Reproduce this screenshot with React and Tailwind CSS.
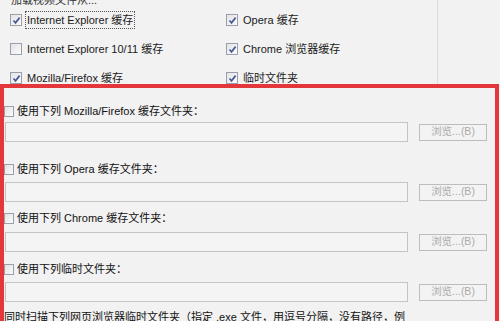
import React from "react";

const FONT = { fontFamily: '"Liberation Sans", "Noto Sans CJK SC", sans-serif' };

function Box({ checked, narrow }) {
  return (
    <span
      className={
        (narrow ? "w-[10px] h-[11px]" : "w-[12px] h-[12px]") +
        " inline-flex items-center justify-center border border-[#9aa0ab] bg-gradient-to-br from-[#e4e4e4] to-[#fbfbfb] shrink-0"
      }
    >
      {checked && (
        <svg width="9" height="9" viewBox="0 0 9 9">
          <path d="M1.5 4.5 L3.5 6.8 L7.6 1.6" fill="none" stroke="#4b5a9c" strokeWidth="1.7" />
        </svg>
      )}
    </span>
  );
}

function Check({ label, checked, focus }) {
  return (
    <div className="flex items-center gap-[3px] h-[20px]">
      <Box checked={checked} />
      <span className={focus ? "px-[1px] border border-dotted border-[#555]" : "px-[1px] border border-transparent"}>{label}</span>
    </div>
  );
}

function PathRow({ label, top, gap }) {
  return (
    <div className="flex flex-col" style={{ marginTop: top }}>
      <div className="flex items-center gap-[3px] h-[20px]">
        <Box narrow />
        <span className="text-[#111]">{label}</span>
      </div>
      <div className="flex items-center h-[20px]" style={{ marginTop: gap }}>
        <div className="w-[403px] h-[20px] ml-[1px] border border-[#c4c4c4] bg-[#f4f4f4]" />
        <div className="ml-[11px] w-[68px] h-[17px] border border-[#bdbdbd] bg-[#f3f3f3] flex items-center justify-center text-[10.5px] text-[#ababab]">
          浏览...(B)
        </div>
      </div>
    </div>
  );
}

export default function App() {
  return (
    <div className="w-[500px] h-[332px] bg-white overflow-hidden text-[11px] text-[#1a1a1a]" style={FONT}>
      <div className="h-[321px] bg-[#f2f2f2] overflow-hidden flex flex-col">
        <div className="h-[84px] shrink-0 flex">
          <div className="w-[438px] border-r border-[#dcdcdc] pl-[10px] flex flex-col">
            <div className="-mt-[6px] h-[12px] leading-[12px] pl-[1px] text-[#333]">加载视频文件从...</div>
            <div className="flex mt-[4px]">
              <div className="w-[216px] flex flex-col gap-[9px]">
                <Check label="Internet Explorer 缓存" checked focus />
                <Check label="Internet Explorer 10/11 缓存" />
                <Check label="Mozilla/Firefox 缓存" checked />
              </div>
              <div className="flex flex-col gap-[9px]">
                <Check label="Opera 缓存" checked />
                <Check label="Chrome 浏览器缓存" checked />
                <Check label="临时文件夹" checked />
              </div>
            </div>
          </div>
        </div>
        <div className="flex-1 w-[499px] border-x-4 border-t-4 border-b border-[#e4373c] flex flex-col">
          <PathRow label="使用下列 Mozilla/Firefox 缓存文件夹：" top={13} gap={1} />
          <PathRow label="使用下列 Opera 缓存文件夹：" top={17} gap={3} />
          <PathRow label="使用下列 Chrome 缓存文件夹：" top={6} gap={4} />
          <PathRow label="使用下列临时文件夹：" top={7} gap={3} />
          <div className="mt-[7px] whitespace-nowrap text-[#111]">
            同时扫描下列网页浏览器临时文件夹（指定 .exe 文件，用逗号分隔，没有路径，例
          </div>
        </div>
      </div>
    </div>
  );
}
